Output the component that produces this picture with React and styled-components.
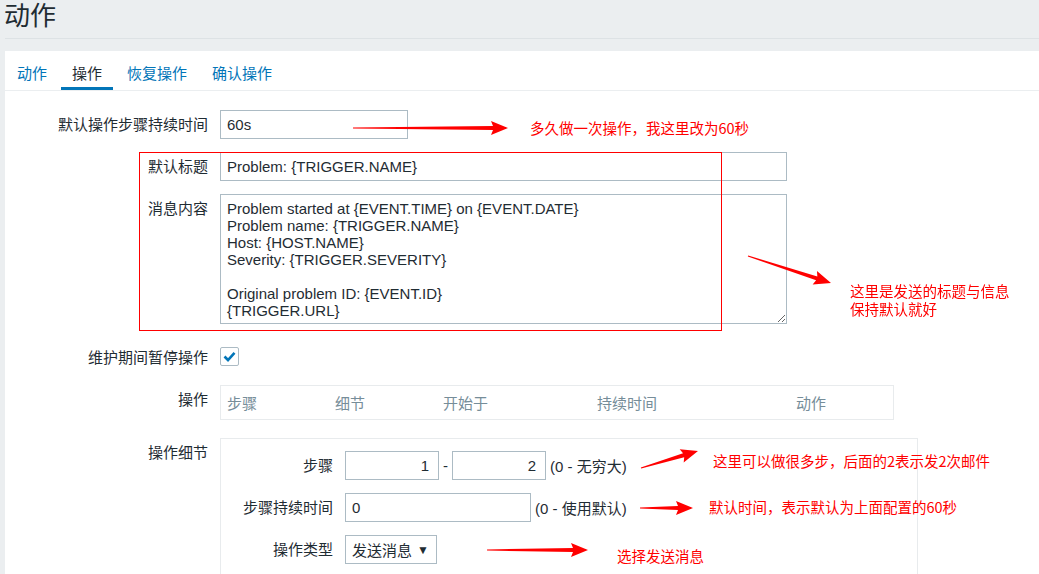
import React from "react";
import styled, { createGlobalStyle } from "styled-components";

const GlobalStyle = createGlobalStyle`
  html, body {
    margin: 0;
    padding: 0;
  }
  body {
    background: #ebeef0;
    font-family: "Liberation Sans", Arial, "Noto Sans CJK SC", sans-serif;
    font-size: 15px;
    color: #1f2c33;
  }
`;

const Page = styled.div`
  position: relative;
  width: 1039px;
  height: 574px;
  padding-left: 5px;
  box-sizing: border-box;
  overflow: hidden;
`;

const Header = styled.div`
  height: 38px;
  border-bottom: 1px solid #dde2e5;
  margin-bottom: 12px;
`;

const Title = styled.h1`
  margin: 0 0 0 -1px;
  font-size: 26px;
  font-weight: normal;
  line-height: 32px;
  color: #1f2c33;
`;

const Panel = styled.div`
  background: #fff;
  height: 100%;
`;

const TabBar = styled.div`
  display: flex;
  gap: 3px;
  padding-left: 1px;
  border-bottom: 1px solid #ebeef0;
`;

const Tab = styled.div`
  height: 39px;
  box-sizing: border-box;
  display: flex;
  align-items: center;
  padding: 6px 11px 0;
  border-bottom: 3px solid ${(p) => (p.$active ? "#0275b8" : "transparent")};
  color: ${(p) => (p.$active ? "#1f2c33" : "#0275b8")};
  font-size: 15px;
`;

const Form = styled.div`
  padding-top: 19px;
`;

const Row = styled.div`
  display: grid;
  grid-template-columns: 203px auto;
  column-gap: 12px;
  align-items: start;
  margin-top: ${(p) => p.$top || 0}px;
`;

const Label = styled.div`
  text-align: right;
  padding-top: 7px;
  line-height: 15px;
  white-space: nowrap;
`;

const Input = styled.div`
  width: ${(p) => p.$w}px;
  height: 29px;
  box-sizing: border-box;
  border: 1px solid #acbbc4;
  background: #fff;
  padding: 0 ${(p) => (p.$right ? 9 : 6)}px 0 6px;
  display: flex;
  align-items: center;
  justify-content: ${(p) => (p.$right ? "flex-end" : "flex-start")};
  white-space: nowrap;
`;

const TextArea = styled.textarea`
  width: 567px;
  height: 130px;
  box-sizing: border-box;
  border: 1px solid #acbbc4;
  padding: 5px 6px;
  margin: 0;
  font-family: inherit;
  font-size: 15px;
  line-height: 17px;
  color: #1f2c33;
  display: block;
  outline: none;
`;

const CheckBox = styled.div`
  width: 19px;
  height: 19px;
  box-sizing: border-box;
  margin-top: 4px;
  border: 1px solid #acbbc4;
  border-radius: 2px;
  display: flex;
  align-items: center;
  justify-content: center;
`;

const OpsTable = styled.div`
  width: 674px;
  height: 35px;
  box-sizing: border-box;
  border: 1px solid #e8ebed;
  padding-left: 6px;
  display: grid;
  grid-template-columns: 108px 108px 154px 199px 1fr;
  align-items: center;
  color: #768d99;
`;

const DetailBox = styled.div`
  width: 698px;
  box-sizing: border-box;
  border: 1px solid #e8ebed;
  border-bottom: none;
  padding: 12px 0 30px;
  display: grid;
  grid-template-columns: 112px auto;
  column-gap: 12px;
  row-gap: 13px;
`;

const Inline = styled.div`
  display: flex;
  align-items: center;
  gap: 4px;
  white-space: nowrap;
`;

const Select = styled.div`
  width: 92px;
  height: 29px;
  box-sizing: border-box;
  border: 1px solid #acbbc4;
  padding: 0 7px 0 6px;
  display: flex;
  align-items: center;
  justify-content: space-between;
`;

const Caret = styled.span`
  font-size: 12px;
  color: #1f2c33;
`;

const RedFrame = styled.div`
  position: absolute;
  left: 139px;
  top: 152px;
  width: 583px;
  height: 179px;
  box-sizing: border-box;
  border: 1px solid #ff0000;
  pointer-events: none;
`;

const Note = styled.div`
  position: absolute;
  left: ${(p) => p.$x}px;
  top: ${(p) => p.$y}px;
  color: #ff0000;
  font-family: "Noto Sans CJK SC", sans-serif;
  font-size: 14.5px;
  line-height: 18px;
  white-space: nowrap;
`;

const ArrowSvg = styled.svg`
  position: absolute;
  left: ${(p) => p.$x}px;
  top: ${(p) => p.$y - 8}px;
  overflow: visible;
  transform-origin: 0 8px;
  transform: rotate(${(p) => p.$angle}deg);
`;

function Arrow({ from, to }) {
  const dx = to[0] - from[0];
  const dy = to[1] - from[1];
  const len = Math.hypot(dx, dy);
  const angle = (Math.atan2(dy, dx) * 180) / Math.PI;
  const h = 15;
  const pts = `0,7.4 ${len - h},6 ${len - h - 2},1 ${len},8 ${len - h - 2},15 ${len - h},10 0,8.6`;
  return (
    <ArrowSvg
      $x={from[0]}
      $y={from[1]}
      $angle={angle}
      width={len}
      height={16}
      viewBox={`0 0 ${len} 16`}
    >
      <polygon points={pts} fill="#ff0000" />
    </ArrowSvg>
  );
}

const message = `Problem started at {EVENT.TIME} on {EVENT.DATE}
Problem name: {TRIGGER.NAME}
Host: {HOST.NAME}
Severity: {TRIGGER.SEVERITY}

Original problem ID: {EVENT.ID}
{TRIGGER.URL}`;

const App = () => {
  return (
    <Page>
      <GlobalStyle />
      <Header>
        <Title>动作</Title>
      </Header>
      <Panel>
        <TabBar>
          <Tab>动作</Tab>
          <Tab $active>操作</Tab>
          <Tab>恢复操作</Tab>
          <Tab>确认操作</Tab>
        </TabBar>
        <Form>
          <Row>
            <Label>默认操作步骤持续时间</Label>
            <Input $w={188}>60s</Input>
          </Row>
          <Row $top={13}>
            <Label>默认标题</Label>
            <Input $w={567}>Problem: {"{TRIGGER.NAME}"}</Input>
          </Row>
          <Row $top={13}>
            <Label>消息内容</Label>
            <TextArea readOnly defaultValue={message} />
          </Row>
          <Row $top={19}>
            <Label>维护期间暂停操作</Label>
            <CheckBox>
              <svg width="13" height="11" viewBox="0 0 13 11">
                <path
                  d="M1.5 5.5 L5 9 L11.5 1.8"
                  fill="none"
                  stroke="#0275b8"
                  strokeWidth="2.6"
                />
              </svg>
            </CheckBox>
          </Row>
          <Row $top={19}>
            <Label>操作</Label>
            <OpsTable>
              <span>步骤</span>
              <span>细节</span>
              <span>开始于</span>
              <span>持续时间</span>
              <span>动作</span>
            </OpsTable>
          </Row>
          <Row $top={18}>
            <Label>操作细节</Label>
            <DetailBox>
              <Label>步骤</Label>
              <Inline>
                <Input $w={94} $right>1</Input>
                <span>-</span>
                <Input $w={94} $right>2</Input>
                <span>(0 - 无穷大)</span>
              </Inline>
              <Label>步骤持续时间</Label>
              <Inline>
                <Input $w={186}>0</Input>
                <span>(0 - 使用默认)</span>
              </Inline>
              <Label>操作类型</Label>
              <Inline>
                <Select>
                  <span>发送消息</span>
                  <Caret>▼</Caret>
                </Select>
              </Inline>
            </DetailBox>
          </Row>
        </Form>
      </Panel>

      <RedFrame />
      <Arrow from={[353, 128]} to={[508, 128]} />
      <Note $x={530} $y={119}>多久做一次操作，我这里改为60秒</Note>
      <Arrow from={[748, 256]} to={[831, 283]} />
      <Note $x={850} $y={282}>
        这里是发送的标题与信息
        <br />
        保持默认就好
      </Note>
      <Arrow from={[641, 468]} to={[698, 451]} />
      <Note $x={713} $y={452}>这里可以做很多步，后面的2表示发2次邮件</Note>
      <Arrow from={[640, 508]} to={[693, 508]} />
      <Note $x={709} $y={498}>默认时间，表示默认为上面配置的60秒</Note>
      <Arrow from={[487, 550]} to={[588, 550]} />
      <Note $x={617} $y={547}>选择发送消息</Note>
    </Page>
  );
};

export default App;
